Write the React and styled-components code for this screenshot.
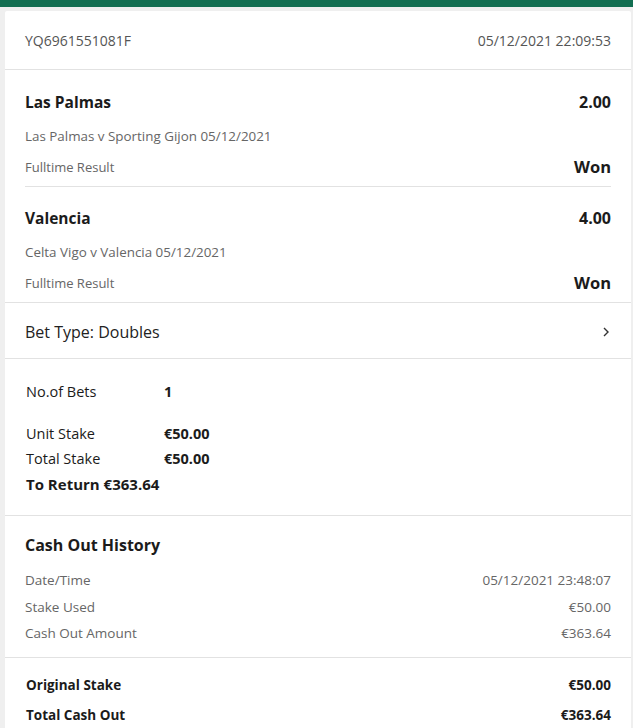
import styled, { createGlobalStyle } from "styled-components";

const GlobalStyle = createGlobalStyle`
    body {
        margin: 0;
        background: #efefef;
        font-family: "Open Sans", "Noto Sans", sans-serif;
        color: #1b1b1b;
    }
`;

const App = () => {
    return (
        <>
            <GlobalStyle />
            <TopBar />
            <Page>
                <Card>
                    <Header>
                        <span>YQ6961551081F</span>
                        <span>05/12/2021 22:09:53</span>
                    </Header>

                    <Selections>
                        <Selection>
                            <Row>
                                <Team>Las Palmas</Team>
                                <Odds>2.00</Odds>
                            </Row>
                            <Event>Las Palmas v Sporting Gijon 05/12/2021</Event>
                            <Row>
                                <Market>Fulltime Result</Market>
                                <Result>Won</Result>
                            </Row>
                        </Selection>
                        <Selection last>
                            <Row>
                                <Team>Valencia</Team>
                                <Odds>4.00</Odds>
                            </Row>
                            <Event>Celta Vigo v Valencia 05/12/2021</Event>
                            <Row>
                                <Market>Fulltime Result</Market>
                                <Result>Won</Result>
                            </Row>
                        </Selection>
                    </Selections>

                    <BetType>
                        <span>Bet Type: Doubles</span>
                        <svg width="10" height="12" viewBox="0 0 10 12">
                            <path d="M3 2 L7 6 L3 10" fill="none" stroke="#333" strokeWidth="1.4" />
                        </svg>
                    </BetType>

                    <Stakes>
                        <StakeRow gap="17px">
                            <StakeLabel>No.of Bets</StakeLabel>
                            <StakeValue>1</StakeValue>
                        </StakeRow>
                        <StakeRow>
                            <StakeLabel>Unit Stake</StakeLabel>
                            <StakeValue>€50.00</StakeValue>
                        </StakeRow>
                        <StakeRow>
                            <StakeLabel>Total Stake</StakeLabel>
                            <StakeValue>€50.00</StakeValue>
                        </StakeRow>
                        <ToReturn>To Return €363.64</ToReturn>
                    </Stakes>

                    <CashOut>
                        <CashTitle>Cash Out History</CashTitle>
                        <InfoRow>
                            <span>Date/Time</span>
                            <span>05/12/2021 23:48:07</span>
                        </InfoRow>
                        <InfoRow>
                            <span>Stake Used</span>
                            <span>€50.00</span>
                        </InfoRow>
                        <InfoRow>
                            <span>Cash Out Amount</span>
                            <span>€363.64</span>
                        </InfoRow>
                    </CashOut>

                    <Totals>
                        <TotalRow>
                            <span>Original Stake</span>
                            <span>€50.00</span>
                        </TotalRow>
                        <TotalRow>
                            <span>Total Cash Out</span>
                            <span>€363.64</span>
                        </TotalRow>
                    </Totals>
                </Card>
            </Page>
        </>
    );
};

const TopBar = styled.div`
    height: 7px;
    background: #126e51;
`;

const Page = styled.div`
    padding: 4px 2px 0 5px;
`;

const Card = styled.div`
    background: #fff;
    border-radius: 2px;
`;

const Header = styled.div`
    display: flex;
    justify-content: space-between;
    align-items: center;
    height: 58px;
    padding: 0 20px;
    font-size: 14px;
    color: #555;
    border-bottom: 1px solid #e2e2e2;
`;

const Selections = styled.div`
    padding: 0 20px;
    border-bottom: 1px solid #e2e2e2;
`;

const Selection = styled.div`
    padding: ${(p) => (p.last ? "20px" : "21px")} 0 8px;
    border-bottom: ${(p) => (p.last ? "none" : "1px solid #e2e2e2")};
`;

const Row = styled.div`
    display: flex;
    justify-content: space-between;
    align-items: center;
`;

const Team = styled.span`
    font-size: 15.5px;
    font-weight: 700;
    line-height: 22px;
`;

const Odds = styled.span`
    font-size: 16px;
    font-weight: 700;
    line-height: 22px;
`;

const Event = styled.div`
    font-size: 13.4px;
    color: #666;
    line-height: 18px;
    margin: 14px 0 11px;
`;

const Market = styled.span`
    font-size: 13px;
    color: #666;
    line-height: 22px;
`;

const Result = styled.span`
    font-size: 16.5px;
    font-weight: 700;
    line-height: 22px;
`;

const BetType = styled.div`
    display: flex;
    justify-content: space-between;
    align-items: center;
    height: 56px;
    padding: 3px 20px 0;
    box-sizing: border-box;
    font-size: 16px;
    color: #222;
    border-bottom: 1px solid #e2e2e2;
`;

const Stakes = styled.div`
    padding: 20px 20px 18px 21px;
    border-bottom: 1px solid #e2e2e2;
`;

const StakeRow = styled.div`
    display: flex;
    font-size: 14.5px;
    line-height: 25px;
    margin-bottom: ${(p) => p.gap || "0"};
`;

const StakeLabel = styled.span`
    width: 138px;
`;

const StakeValue = styled.span`
    font-weight: 700;
`;

const ToReturn = styled.div`
    font-size: 15px;
    font-weight: 700;
    line-height: 26px;
`;

const CashOut = styled.div`
    padding: 16px 20px 10px;
    border-bottom: 1px solid #e2e2e2;
`;

const CashTitle = styled.div`
    font-size: 16px;
    font-weight: 700;
    line-height: 26px;
    margin-bottom: 9px;
`;

const InfoRow = styled.div`
    display: flex;
    justify-content: space-between;
    font-size: 13.5px;
    color: #666;
    line-height: 26.5px;
`;

const Totals = styled.div`
    padding: 12px 20px 6px 21px;
`;

const TotalRow = styled.div`
    display: flex;
    justify-content: space-between;
    font-size: 13.5px;
    font-weight: 700;
    line-height: 30px;
`;

export default App;
